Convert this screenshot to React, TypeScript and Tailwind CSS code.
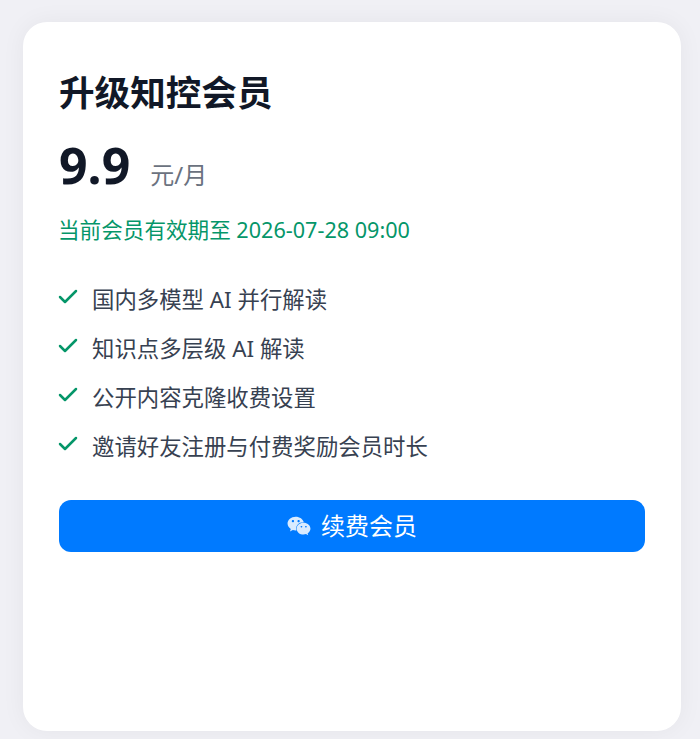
import { Check } from 'lucide-react';
import { FaWeixin } from 'react-icons/fa';

const features = [
  '国内多模型 AI 并行解读',
  '知识点多层级 AI 解读',
  '公开内容克隆收费设置',
  '邀请好友注册与付费奖励会员时长',
];

export default function App() {
  return (
    <div
      className="h-[739px] w-[700px] overflow-hidden bg-[#f0f0f5] pt-[22px] pl-[23px]"
      style={{ fontFamily: '"Noto Sans", "Noto Sans CJK SC", sans-serif' }}
    >
      <div className="h-[709px] w-[658px] rounded-[24px] bg-white px-9 pt-[44px] shadow-[0_0_24px_rgba(0,0,0,0.05)]">
        <h2 className="text-[35.6px] leading-[52px] font-bold text-[#111827]">升级知控会员</h2>
        <div className="mt-[17px] flex items-baseline">
          <span className="text-[50px] leading-[60px] font-bold text-[#111827]">9.9</span>
          <span className="ml-5 text-[24px] text-[#6b7280]">元/月</span>
        </div>
        <p className="-ml-px mt-[19px] text-[21.6px] leading-[32px] text-[#059669]">当前会员有效期至 2026-07-28 09:00</p>
        <ul className="mt-[38px] flex flex-col gap-[17px]">
          {features.map((f) => (
            <li key={f} className="flex items-start text-[22.4px] leading-[32px] text-[#374151]">
              <Check className="-ml-[3px] mt-[1px] mr-[12px] h-6 w-6 shrink-0 text-[#059669]" strokeWidth={2.5} />
              {f}
            </li>
          ))}
        </ul>
        <button className="mt-[37px] flex h-[52px] w-full items-center justify-center rounded-xl bg-[#007aff] text-[24px] font-normal text-white">
          <FaWeixin className="mr-[10px] h-6 w-6 text-white/85" />
          续费会员
        </button>
      </div>
    </div>
  );
}
